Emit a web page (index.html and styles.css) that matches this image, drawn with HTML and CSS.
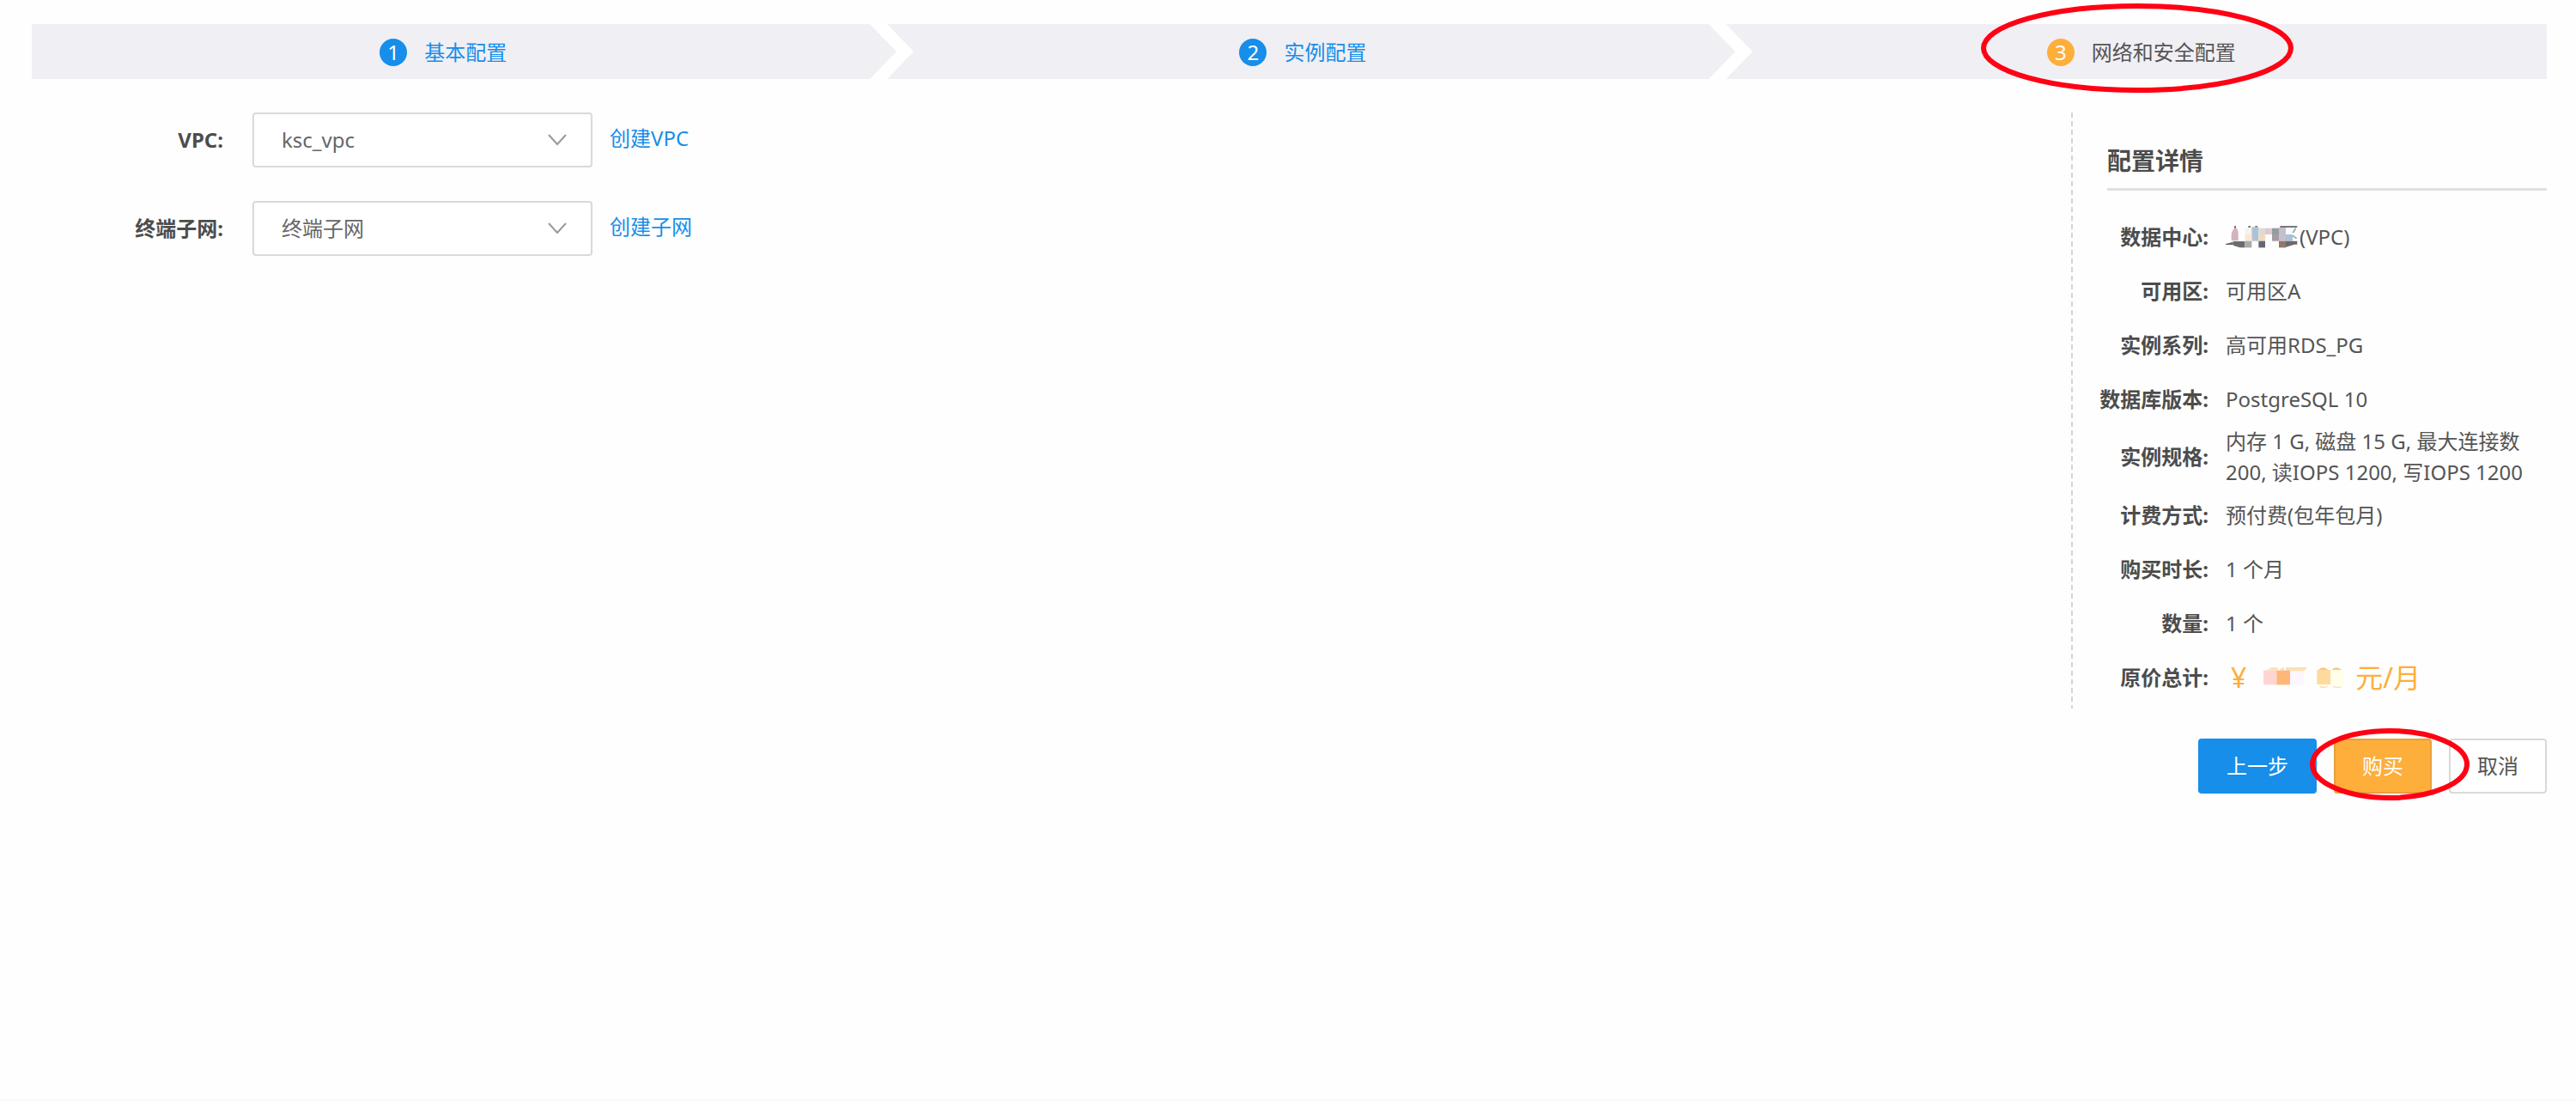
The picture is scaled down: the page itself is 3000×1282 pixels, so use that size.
FILE: index.html
```html
<!DOCTYPE html>
<html lang="zh-CN">
<head>
<meta charset="utf-8">
<meta name="viewport" content="width=device-width, initial-scale=1">
<title>网络和安全配置</title>
<link rel="stylesheet" href="styles.css">
</head>
<body>
<div class="page">
  <ol class="steps">
    <li class="step">
      <span class="step-body"><span class="step-num">1</span>基本配置</span>
    </li>
    <li class="step">
      <svg class="step-arrow" viewBox="0 0 52 64" aria-hidden="true"><path d="M0 0H20L51 32L20 64H0L31 32Z" fill="#fff"/></svg>
      <span class="step-body"><span class="step-num">2</span>实例配置</span>
    </li>
    <li class="step step-current">
      <svg class="step-arrow" viewBox="0 0 52 64" aria-hidden="true"><path d="M0 0H20L51 32L20 64H0L31 32Z" fill="#fff"/></svg>
      <span class="step-body"><span class="step-num">3</span>网络和安全配置
        <svg class="ring ring-step" viewBox="0 0 364 104" aria-hidden="true"><ellipse cx="182" cy="52" rx="179" ry="49"/></svg>
      </span>
    </li>
  </ol>

  <main class="content">
    <form class="form">
      <div class="field">
        <label class="field-label" for="vpc">VPC:</label>
        <div class="select-box">
          <select class="select" id="vpc"><option>ksc_vpc</option></select>
          <svg class="chevron" viewBox="0 0 22 14" aria-hidden="true"><path d="M1 1L11 12L21 1"/></svg>
        </div>
        <a class="link" href="#">创建VPC</a>
      </div>
      <div class="field">
        <label class="field-label" for="subnet">终端子网:</label>
        <div class="select-box">
          <select class="select" id="subnet"><option>终端子网</option></select>
          <svg class="chevron" viewBox="0 0 22 14" aria-hidden="true"><path d="M1 1L11 12L21 1"/></svg>
        </div>
        <a class="link" href="#">创建子网</a>
      </div>
    </form>

    <div class="side">
      <aside class="summary">
        <h2 class="summary-title">配置详情</h2>
        <dl class="details">
          <div class="row"><dt>数据中心:</dt><dd class="masked">
            <svg class="region-mask" viewBox="0 0 258 78" aria-hidden="true">
              <path d="M30 0h6v10h-6zM79 0h8v6h-8zM103 0h8v6h-8zM190 0h60v6h-60z" fill="#777"/>
              <path d="M20 30Q22 10 36 8Q44 10 44 28V52H20Z" fill="#d4b3c1"/>
              <path d="M0 63L26 56V66H0Z" fill="#666"/>
              <path d="M26 54H67V76H50L26 68Z" fill="#6b6b6b"/>
              <path d="M67 8h24v22h-24z" fill="#f5f3f1"/><path d="M91 4h24v49h-24z" fill="#afc1d5"/>
              <path d="M115 8h23v22h-23z" fill="#dadbdd"/><path d="M138 8h24v22h-24z" fill="#e1c8cf"/>
              <path d="M162 8h24v22h-24z" fill="#949d9e"/><path d="M186 6h24v47h-24z" fill="#c6bfcc"/>
              <path d="M210 8h24v22h-24z" fill="#f8faff"/><path d="M67 30h24v23h-24z" fill="#fce7d1"/>
              <path d="M115 30h23v23h-23z" fill="#f1d9bd"/><path d="M138 30h24v46h-24z" fill="#fafcff"/>
              <path d="M162 30h24v23h-24z" fill="#a39da3"/><path d="M210 30h24v23h-24z" fill="#adc0d4"/>
              <path d="M67 53h24v23h-24z" fill="#a7adaf"/><path d="M115 53h23v23h-23z" fill="#68657a"/>
              <path d="M186 53h24v23h-24z" fill="#91786c"/><path d="M210 53h40v12H240L210 74z" fill="#696969"/>
              <path d="M245 8L235 24M234 34L248 44" stroke="#8aa" stroke-width="5" fill="none"/>
            </svg>(VPC)</dd></div>
          <div class="row"><dt>可用区:</dt><dd>可用区A</dd></div>
          <div class="row"><dt>实例系列:</dt><dd>高可用RDS_PG</dd></div>
          <div class="row"><dt>数据库版本:</dt><dd>PostgreSQL 10</dd></div>
          <div class="row"><dt>实例规格:</dt><dd>内存 1 G, 磁盘 15 G, 最大连接数 200, 读IOPS 1200, 写IOPS 1200</dd></div>
          <div class="row"><dt>计费方式:</dt><dd>预付费(包年包月)</dd></div>
          <div class="row"><dt>购买时长:</dt><dd>1 个月</dd></div>
          <div class="row"><dt>数量:</dt><dd>1 个</dd></div>
          <div class="row"><dt>原价总计:</dt><dd class="price"><span>¥</span>
            <svg class="price-mask" viewBox="0 0 288 78" aria-hidden="true">
              <path d="M8 14L28 4H50V14ZM60 6L72 4V14H58ZM78 3H154L140 17H78Z" fill="#fee0b4"/>
              <path d="M0 14h46v50h-46z" fill="#fed5d3"/><path d="M46 14h47v50h-47z" fill="#ffb777"/>
              <path d="M93 16h47v48h-47z" fill="#fdf6ff"/>
              <path d="M192 12Q208 -4 226 12ZM238 12Q254 -4 274 12Z" fill="#fdc774"/>
              <path d="M187 12h48v51h-48z" fill="#fedb9d"/><path d="M235 12h47v51h-47z" fill="#fffee9"/>
              <path d="M196 70Q208 76 224 70M244 70Q258 76 272 70" stroke="#fedb9d" stroke-width="4" fill="none"/>
            </svg><span>元/月</span></dd></div>
        </dl>
      </aside>
      <div class="actions">
        <button class="btn btn-prev" type="button">上一步</button>
        <div class="buy">
          <button class="btn btn-buy" type="button">购买</button>
          <svg class="ring ring-buy" viewBox="0 0 186 84" aria-hidden="true"><ellipse cx="93" cy="42" rx="90" ry="39"/></svg>
        </div>
        <button class="btn" type="button">取消</button>
      </div>
    </div>
  </main>
</div>
</body>
</html>
```
FILE: styles.css
```css
* {
  box-sizing: border-box;
}

body {
  margin: 0;
  background: #fefefe;
  color: #555;
  font: 24px/36px "Noto Sans", "Noto Sans CJK SC", sans-serif;
}

.page {
  min-height: 100vh;
  padding: 28px 34px 0 37px;
  border-bottom: 2px solid #f8f8f8;
}

/* Step bar */
.steps {
  display: grid;
  grid-template-columns: repeat(3, 1fr);
  margin: 0;
  padding: 0;
  list-style: none;
  background: #f0eff4;
}

.step {
  position: relative;
  display: flex;
  align-items: center;
  justify-content: center;
  height: 64px;
  padding: 2px 18px 0 0;
  color: #168eea;
}

.step + .step {
  padding: 2px 0 0 32px;
}

.step-arrow {
  position: absolute;
  left: 0;
  top: 0;
  width: 52px;
  height: 64px;
}

.step-body {
  position: relative;
  display: flex;
  align-items: center;
  gap: 20px;
}

.step-num {
  width: 32px;
  height: 32px;
  border-radius: 50%;
  background: #168eea;
  color: #fff;
  line-height: 32px;
  text-align: center;
}

.step-current {
  color: #555;
}

.step-current .step-num {
  background: #feae3b;
}

/* Highlight rings */
.ring {
  position: absolute;
  fill: none;
  stroke: #ff0014;
  stroke-width: 6px;
  pointer-events: none;
}

.ring-step {
  left: -77px;
  top: -39px;
  width: 364px;
  height: 104px;
}

.ring-buy {
  left: -28px;
  top: -12px;
  width: 186px;
  height: 84px;
}

/* Content */
.content {
  display: flex;
  align-items: flex-start;
  justify-content: space-between;
  gap: 40px;
  padding-top: 39px;
}

.form {
  display: grid;
  gap: 39px;
}

.field {
  display: flex;
  align-items: center;
}

.field-label {
  width: 223px;
  margin-right: 34px;
  color: #4c4c4c;
  font-weight: 700;
  text-align: right;
}

.select-box {
  position: relative;
  width: 396px;
  margin-right: 20px;
}

.select {
  display: block;
  width: 100%;
  height: 64px;
  padding: 0 60px 0 32px;
  appearance: none;
  border: 2px solid #d9d9d9;
  border-radius: 4px;
  background: #fff;
  color: #666;
  font: inherit;
}

.chevron {
  position: absolute;
  right: 30px;
  top: 25px;
  width: 22px;
  height: 14px;
  fill: none;
  stroke: #999;
  stroke-width: 2px;
  pointer-events: none;
}

.link {
  padding-bottom: 4px;
  color: #168eea;
  text-decoration: none;
}

/* Order summary */
.side {
  width: 554px;
}

.summary {
  padding: 24px 0 5px;
  background: repeating-linear-gradient(#d4d4d4 0 6px, transparent 6px 10px) 0 0 / 2px 100% no-repeat;
}

.summary-title {
  margin: 0 0 22px 42px;
  border-bottom: 3px solid #e0e0e0;
  color: #4c4c4c;
  font-size: 28px;
  line-height: 64px;
}

.details {
  margin: 0;
}

.row {
  display: grid;
  grid-template-columns: 160px 1fr;
  align-items: center;
  column-gap: 20px;
  min-height: 63px;
}

.row dt {
  color: #4c4c4c;
  font-weight: 700;
  text-align: right;
}

.row dd {
  margin: 0;
}

.masked,
.price {
  display: flex;
  align-items: center;
}

.region-mask {
  width: 86px;
  height: 26px;
}

.price {
  padding-left: 6px;
  color: #feae3b;
  font-size: 32px;
}

.price-mask {
  width: 96px;
  height: 26px;
  margin: 0 11px 0 20px;
}

.actions {
  display: flex;
  justify-content: flex-end;
  gap: 20px;
  margin-top: 35px;
}

.buy {
  position: relative;
  z-index: 1;
}

.btn {
  height: 64px;
  padding: 0 31px;
  border: 2px solid #d9d9d9;
  border-radius: 4px;
  background: #fff;
  color: #555;
  font: inherit;
}

.btn-prev {
  border-color: #168eea;
  background: #168eea;
  color: #fff;
}

.btn-buy {
  border-color: #e8a03a;
  background: #feae3b;
  color: #fff;
}
```
